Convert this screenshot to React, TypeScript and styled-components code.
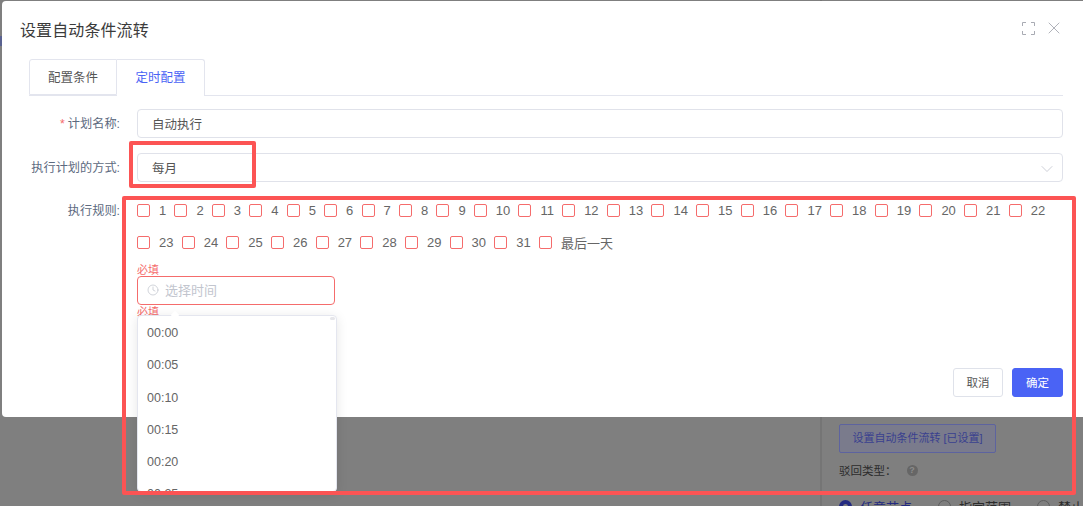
import React from 'react'
import styled, { createGlobalStyle } from 'styled-components'
import { ChevronDown, Clock, X } from 'lucide-react'

const FONT = `"Liberation Sans", "Noto Sans CJK SC", sans-serif`

const GlobalStyle = createGlobalStyle`
  html, body {
    margin: 0;
    padding: 0;
    font-family: ${FONT};
  }
  * { box-sizing: border-box; }
`

const Page = styled.div`
  position: relative;
  display: flex;
  width: 1083px;
  height: 506px;
  overflow: hidden;
  background: #7f7f7f;
`

const SideMark = styled.div`
  flex: none;
  width: 2px;
  height: 10px;
  margin-top: 36px;
  background: #5a6290;
`

const UnderPanel = styled.div`
  flex: none;
  width: 263px;
  margin-left: 818px;
  height: 506px;
  border-left: 2px solid #757575;
  padding: 424px 0 0 17px;
`

const UnderButton = styled.div`
  width: 157px;
  height: 29px;
  border: 1px solid #5d639f;
  border-radius: 2px;
  background: #7a7b8c;
  color: #39408f;
  font-size: 11px;
  line-height: 27px;
  text-align: center;
`

const UnderLabel = styled.div`
  display: flex;
  align-items: center;
  gap: 10px;
  margin-top: 8px;
  height: 18px;
  color: #2c2c2c;
  font-size: 11.5px;
`

const HelpDot = styled.span`
  width: 11px;
  height: 11px;
  border-radius: 50%;
  background: #666;
  color: #8c8c8c;
  font-size: 9px;
  font-weight: bold;
  line-height: 11px;
  text-align: center;
`

const RadioRow = styled.div`
  display: flex;
  align-items: center;
  margin-top: 20px;
  height: 14px;
  white-space: nowrap;
  font-size: 13px;
`

const Radio = styled.span<{ $on?: boolean }>`
  flex: none;
  width: 13px;
  height: 13px;
  margin-right: 8px;
  border-radius: 50%;
  border: ${p => (p.$on ? '4px solid #232a80' : '1px solid #5e5e5e')};
  background: #7f7f7f;
`

const RadioText = styled.span<{ $on?: boolean }>`
  flex: none;
  width: 78px;
  color: ${p => (p.$on ? '#232a80' : '#2c2c2c')};
`

const Modal = styled.div`
  position: absolute;
  top: 1px;
  left: 2px;
  width: 1081px;
  height: 416px;
  display: flex;
  flex-direction: column;
  padding: 0 20px 20px 18px;
  border-radius: 4px 0 0 4px;
  background: #fff;
`

const Header = styled.div`
  display: flex;
  align-items: center;
  justify-content: space-between;
  height: 58px;
  padding-bottom: 2px;
`

const Title = styled.h2`
  margin: 0;
  font-size: 16px;
  letter-spacing: 0.1px;
  font-weight: 400;
  color: #3b3b3b;
`

const HeaderIcons = styled.div`
  display: flex;
  align-items: center;
  gap: 9px;
  margin: -2px -1px 0 0;
  color: #a9abb3;
`

const TabBar = styled.div`
  display: flex;
  height: 37px;
  margin-left: 9px;
  border-bottom: 1px solid #e3e5ee;
`

const Tab = styled.div<{ $active?: boolean }>`
  width: 88px;
  height: ${p => (p.$active ? '37px' : '36px')};
  border: 1px solid #e3e5ee;
  border-left-width: ${p => (p.$active ? '0' : '1px')};
  border-bottom-width: ${p => (p.$active ? '0' : '1px')};
  border-radius: ${p => (p.$active ? '0 3px 0 0' : '3px 0 0 0')};
  background: #fff;
  color: ${p => (p.$active ? '#4a63f5' : '#555')};
  font-size: 12.5px;
  line-height: 36px;
  text-align: center;
`

const FormRow = styled.div<{ $top: number }>`
  display: flex;
  align-items: flex-start;
  margin-top: ${p => p.$top}px;
`

const Label = styled.div<{ $offset?: number }>`
  flex: none;
  width: 100px;
  margin-right: 17px;
  padding-top: ${p => p.$offset ?? 7}px;
  color: #5d6a80;
  font-size: 12.2px;
  line-height: 14px;
  text-align: right;
  white-space: nowrap;
`

const Star = styled.span`
  color: #f56c6c;
  margin-right: 3px;
`

const Field = styled.div`
  flex: 1;
  display: flex;
  align-items: center;
  justify-content: space-between;
  height: 29px;
  padding: 0 14px;
  border: 1px solid #e0e2ea;
  border-radius: 4px;
  color: #555;
  font-size: 12.5px;
`

const Chevron = styled(ChevronDown)`
  margin: 3px -9px 0 0;
  color: #c3c5cf;
`

const RuleBody = styled.div`
  flex: 1;
  min-width: 0;
`

const DayGrid = styled.div`
  display: flex;
  flex-wrap: wrap;
  row-gap: 17px;
`

const Day = styled.label`
  display: flex;
  align-items: center;
  height: 15px;
  margin-right: 8.2px;
  color: #666;
  font-size: 13px;
  white-space: nowrap;
`

const DayBox = styled.span`
  flex: none;
  width: 13px;
  height: 13px;
  margin-right: 9px;
  border: 1px solid #f56c6c;
  border-radius: 2px;
`

const ErrorText = styled.div<{ $top: number }>`
  margin-top: ${p => p.$top}px;
  color: #f56c6c;
  font-size: 11px;
  line-height: 12px;
`

const TimeField = styled.div`
  position: relative;
  width: 198px;
`

const TimeInput = styled.div`
  display: flex;
  align-items: center;
  gap: 6px;
  height: 29px;
  padding: 0 0 2px 9px;
  border: 1px solid #f56c6c;
  border-radius: 4px;
  color: #c2c5ce;
  font-size: 13px;
`

const Dropdown = styled.div`
  position: absolute;
  top: 39px;
  left: 0;
  z-index: 3;
  width: 200px;
  height: 177px;
  padding: 0 9px;
  overflow: hidden;
  border: 1px solid #e4e6ef;
  border-radius: 4px;
  background: #fff;
  box-shadow: 0 2px 12px rgba(0, 0, 0, 0.1);
`

const Arrow = styled.span`
  position: absolute;
  top: 36px;
  left: 35px;
  z-index: 4;
  width: 6px;
  height: 6px;
  background: #fff;
  transform: rotate(45deg);
`

const ScrollThumb = styled.span`
  position: absolute;
  top: 1px;
  right: 1px;
  width: 5px;
  height: 3px;
  border-radius: 2px;
  background: #e6e6ea;
`

const TimeOption = styled.div`
  height: 32.3px;
  padding-top: 10px;
  color: #666;
  font-size: 12.5px;
  line-height: 14px;
`

const Footer = styled.div`
  display: flex;
  justify-content: flex-end;
  gap: 9px;
  margin-top: auto;
`

const FooterButton = styled.button<{ $primary?: boolean }>`
  width: ${p => (p.$primary ? '51px' : '50px')};
  height: 29px;
  padding: 0 0 2px;
  border: 1px solid ${p => (p.$primary ? '#4a63f5' : '#dfe2ea')};
  border-radius: 3px;
  background: ${p => (p.$primary ? '#4a63f5' : '#fff')};
  color: ${p => (p.$primary ? '#fff' : '#555')};
  font-family: ${FONT};
  font-size: 11.5px;
`

const Annotation = styled.div<{ $x: number; $y: number; $w: number; $h: number }>`
  position: absolute;
  left: ${p => p.$x}px;
  top: ${p => p.$y}px;
  width: ${p => p.$w}px;
  height: ${p => p.$h}px;
  z-index: 5;
  border: 4px solid #fc5454;
  border-radius: 2px;
  pointer-events: none;
`

const days = Array.from({ length: 31 }, (_, i) => String(i + 1)).concat('最后一天')
const times = ['00:00', '00:05', '00:10', '00:15', '00:20', '00:25']

const ExpandIcon = () => (
  <svg width="13" height="13" viewBox="0 0 13 13" fill="none" stroke="currentColor" strokeWidth="1">
    <path d="M.5 4V.5H4M9 .5h3.5V4M12.5 9v3.5H9M4 12.5H.5V9" />
  </svg>
)

const App = () => {
  return (
    <Page lang="zh-CN">
      <GlobalStyle />
      <SideMark />
      <UnderPanel>
        <UnderButton>设置自动条件流转 [已设置]</UnderButton>
        <UnderLabel>
          驳回类型：
          <HelpDot>?</HelpDot>
        </UnderLabel>
        <RadioRow>
          <Radio $on />
          <RadioText $on>任意节点</RadioText>
          <Radio />
          <RadioText>指定范围</RadioText>
          <Radio />
          <RadioText>禁止</RadioText>
        </RadioRow>
      </UnderPanel>

      <Modal>
        <Header>
          <Title>设置自动条件流转</Title>
          <HeaderIcons>
            <ExpandIcon />
            <X size={20} strokeWidth={1.1} />
          </HeaderIcons>
        </Header>
        <TabBar>
          <Tab>配置条件</Tab>
          <Tab $active>定时配置</Tab>
        </TabBar>
        <FormRow $top={13}>
          <Label $offset={8}>
            <Star>*</Star>计划名称:
          </Label>
          <Field>自动执行</Field>
        </FormRow>
        <FormRow $top={15}>
          <Label $offset={8}>执行计划的方式:</Label>
          <Field>
            每月
            <Chevron size={20} strokeWidth={1} />
          </Field>
        </FormRow>
        <FormRow $top={21}>
          <Label $offset={1}>执行规则:</Label>
          <RuleBody>
            <DayGrid>
              {days.map(day => (
                <Day key={day}>
                  <DayBox />
                  {day}
                </Day>
              ))}
            </DayGrid>
            <ErrorText $top={14}>必填</ErrorText>
            <TimeField>
              <TimeInput>
                <Clock size={12} strokeWidth={1.5} />
                选择时间
              </TimeInput>
              <ErrorText $top={1}>必填</ErrorText>
              <Arrow />
              <Dropdown>
                <ScrollThumb />
                {times.map(time => (
                  <TimeOption key={time}>{time}</TimeOption>
                ))}
              </Dropdown>
            </TimeField>
          </RuleBody>
        </FormRow>
        <Footer>
          <FooterButton>取消</FooterButton>
          <FooterButton $primary>确定</FooterButton>
        </Footer>
      </Modal>

      <Annotation $x={129} $y={141} $w={127} $h={47} />
      <Annotation $x={122} $y={196} $w={954} $h={299} />
    </Page>
  )
}

export default App
